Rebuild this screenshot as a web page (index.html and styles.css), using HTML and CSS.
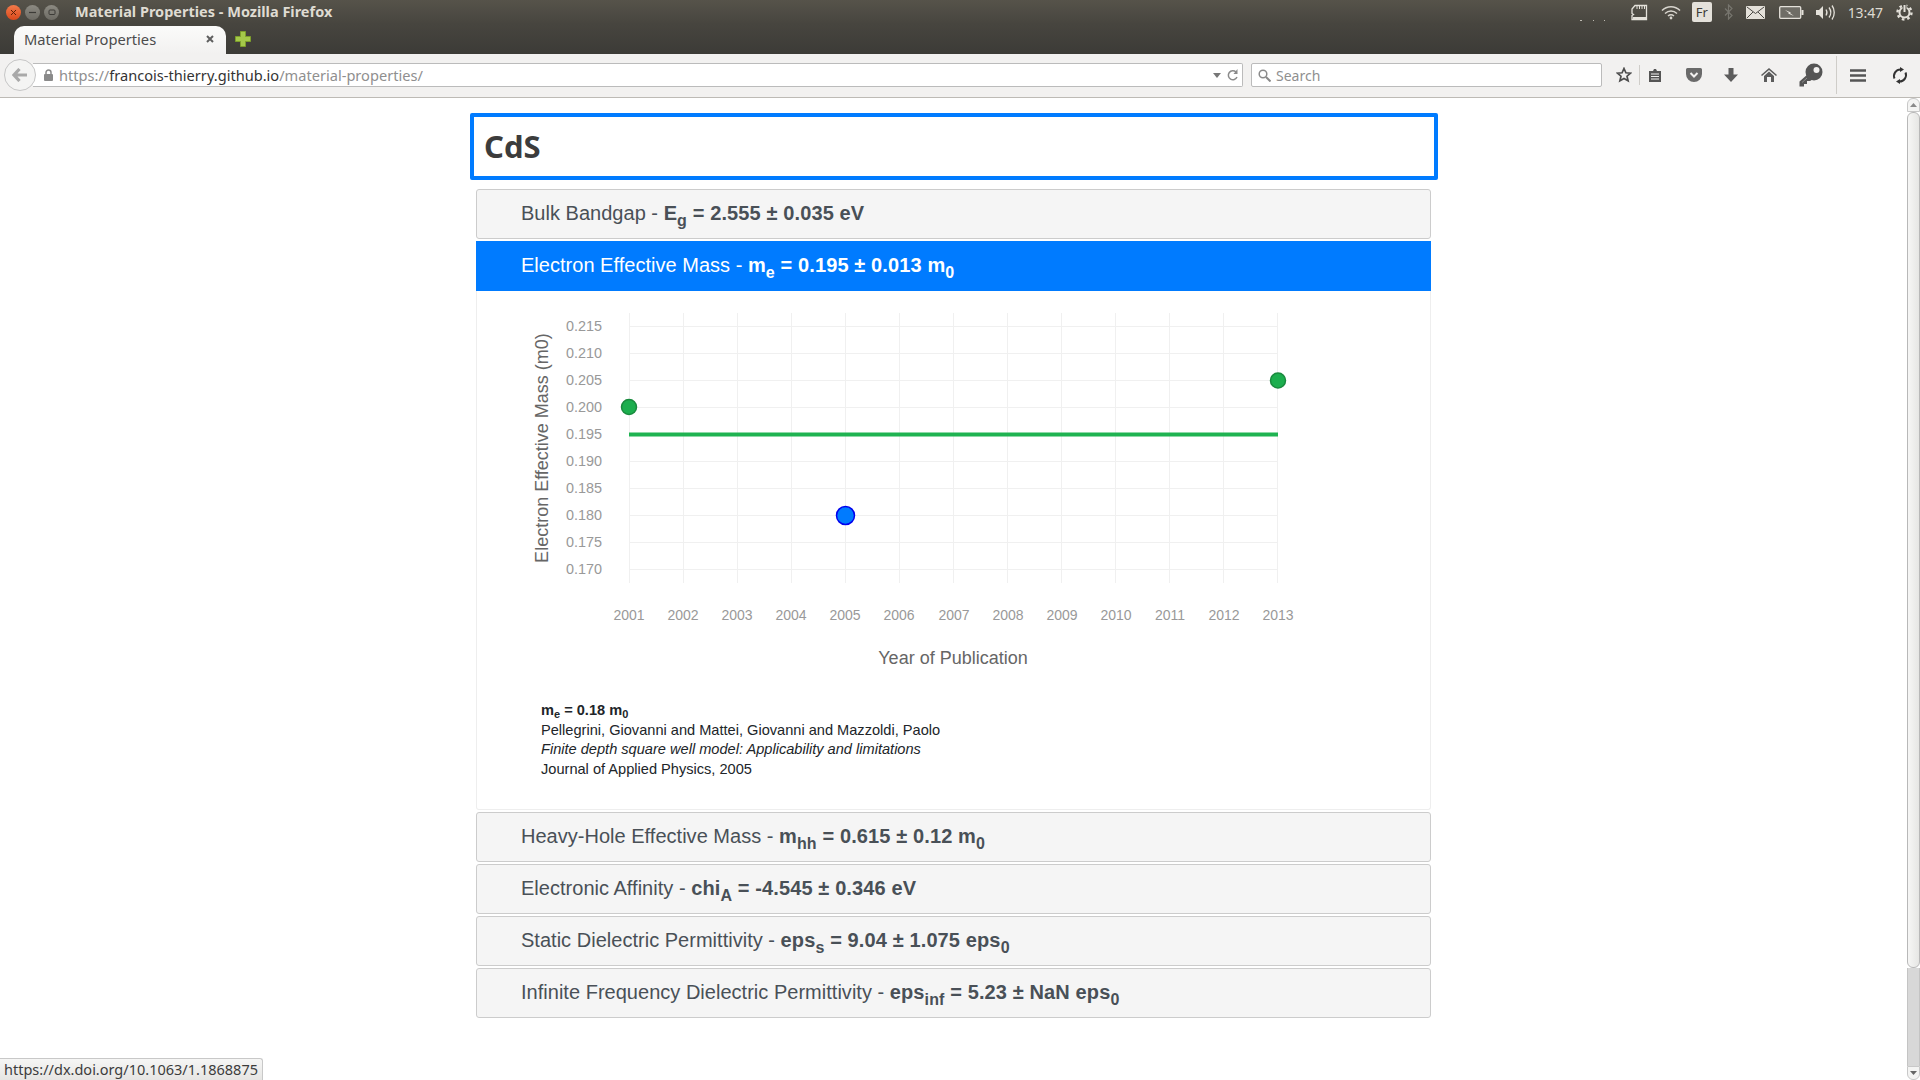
FILE: index.html
```html
<!DOCTYPE html>
<html lang="en">
<head>
    <meta charset="UTF-8">
    <title>Material Properties - Mozilla Firefox</title>
    <link rel="stylesheet" href="styles.css">
</head>
<body>
<div class="desktop">

    <div class="titlebar">
        <div class="window-buttons">
            <span class="win-btn win-close"><svg width="7" height="7" viewBox="0 0 7 7"><path d="M1 1l5 5M6 1l-5 5" stroke="#5c2008" stroke-width="1"/></svg></span>
            <span class="win-btn"><svg width="7" height="7" viewBox="0 0 7 7"><path d="M0 3.5h7" stroke="#3c3b37" stroke-width="1.2"/></svg></span>
            <span class="win-btn"><svg width="8" height="7" viewBox="0 0 8 7"><rect x="1" y="1" width="6" height="4.5" rx="1" fill="none" stroke="#3c3b37"/></svg></span>
        </div>
        <div class="window-title">Material Properties - Mozilla Firefox</div>
        <div class="indicators">
            <svg class="ind-dots" width="26" height="2" viewBox="0 0 26 2"><path d="M0 0h2v1H0zM13 0h1v1h-1zM24 0h1v1h-1z" fill="#bdbab2"/></svg>
            <svg class="ind-sd" width="18" height="17" viewBox="0 0 18 17"><path d="M5 1.5h11.5v14H2v-4l1.5-1-1.5-1V5z" fill="none" stroke="#e4e1da" stroke-width="1.3"/><path d="M3 13h13v2.5H3z" fill="#e4e1da"/><path d="M7 2v3M9.5 2v3M12 2v3M14.5 2v3" stroke="#e4e1da"/></svg>
            <svg class="ind-wifi" width="20" height="15" viewBox="0 0 20 15"><path d="M1 5.500c5-5 13-5 18 0M4 8.500c3.500-3.300 8.500-3.300 12 0M7 11c1.800-1.500 4.200-1.500 6 0" fill="none" stroke="#d8d5ce" stroke-width="1.5"/><circle cx="10" cy="13" r="1.4" fill="#d8d5ce"/></svg>
            <span class="ind-lang">Fr</span>
            <svg class="ind-bt" width="9" height="16" viewBox="0 0 9 16"><path d="M1 4.500l7 7-3.500 3.500V1L8 4.500l-7 7" fill="none" stroke="#77756e" stroke-width="1.2"/></svg>
            <svg class="ind-mail" width="19" height="13" viewBox="0 0 19 13"><rect width="19" height="13" rx="1" fill="#e4e1da"/><path d="M1 1l8.500 6.500L18 1M1 12l6-6M18 12l-6-6" fill="none" stroke="#4a4843" stroke-width="1"/></svg>
            <svg class="ind-batt" width="25" height="13" viewBox="0 0 25 13"><rect x=".7" y=".7" width="21" height="11.6" rx="1" fill="#6f6d66" stroke="#e4e1da" stroke-width="1.3"/><rect x="22.5" y="4" width="2" height="5" fill="#e4e1da"/><path d="M6 4l6 2.500-1 .5 4 3-6-2.500 1-.5z" fill="#e4e1da"/></svg>
            <svg class="ind-vol" width="21" height="17" viewBox="0 0 21 17"><path d="M1 6h3l4-4v13l-4-4H1z" fill="#e4e1da"/><path d="M11 5.500c1.300 2 1.300 4 0 6M14 3.500c2.200 3 2.200 7 0 10M17 1.500c3 4 3 10 0 14" fill="none" stroke="#e4e1da" stroke-width="1.3"/></svg>
            <span class="ind-time">13:47</span>
            <svg class="ind-gear" width="17" height="17" viewBox="0 0 17 17"><circle cx="8.5" cy="8.5" r="7" fill="none" stroke="#e4e1da" stroke-width="2.4" stroke-dasharray="2.6 2.9"/><circle cx="8.5" cy="8.5" r="5" fill="none" stroke="#e4e1da" stroke-width="2"/><path d="M8.5 0v8" stroke="#4e4c45" stroke-width="4"/><path d="M8.500 1v7" stroke="#e4e1da" stroke-width="2"/></svg>
        </div>
    </div>

    <div class="tabbar">
        <div class="tab">
            <span class="tab-label">Material Properties</span>
            <svg class="tab-close" width="8" height="8" viewBox="0 0 8 8"><path d="M1 1l6 6M7 1l-6 6" stroke="#5f5f5f" stroke-width="2"/></svg>
        </div>
        <svg class="new-tab" width="16" height="16" viewBox="0 0 16 16"><path d="M5.500 .5h5v5h5v5h-5v5h-5v-5h-5v-5h5z" fill="#a4c94a" stroke="#7d9e2b"/></svg>
    </div>

    <div class="navbar">
        <div class="back-btn"><svg width="16" height="14" viewBox="0 0 16 14"><path d="M7.500 1L2 7l5.500 6M2.500 7H15" fill="none" stroke="#a9a9a9" stroke-width="3.2"/></svg></div>
        <div class="urlbar">
            <svg class="lock" width="11" height="12" viewBox="0 0 11 12"><path d="M3 5V3.500a2.500 2.500 0 0 1 5 0V5" fill="none" stroke="#8a8a8a" stroke-width="1.5"/><rect x="1" y="5" width="9" height="7" rx="1" fill="#8a8a8a"/></svg>
            <span class="url-text">https://<b>francois-thierry.github.io</b>/material-properties/</span>
            <svg class="url-drop" width="8" height="5" viewBox="0 0 8 5"><path d="M0 0h8L4 5z" fill="#777"/></svg>
            <svg class="url-reload" width="12" height="13" viewBox="0 0 12 13"><path d="M10 8a4.500 4.500 0 1 1-1-5" fill="none" stroke="#8a8a8a" stroke-width="1.5"/><path d="M10.500 0v5h-4z" fill="#8a8a8a"/></svg>
        </div>
        <div class="searchbar">
            <svg width="13" height="13" viewBox="0 0 13 13"><circle cx="5" cy="5" r="3.8" fill="none" stroke="#8a8a8a" stroke-width="1.5"/><path d="M8 8l4.500 4.500" stroke="#8a8a8a" stroke-width="2"/></svg>
            <span>Search</span>
        </div>
        <div class="toolbar">
            <svg class="tool-star" width="16" height="16" viewBox="0 0 16 16"><path d="M8 1.500l1.900 4.300 4.600.4-3.500 3 1.100 4.600L8 11.400l-4.100 2.400L5 9.200l-3.500-3 4.600-.4z" fill="none" stroke="#4d4d4d" stroke-width="1.7"/></svg>
            <span class="tool-sep tool-sep-a"></span>
            <svg class="tool-list" width="14" height="15" viewBox="0 0 14 15"><path d="M1 3h4l1-2h2l1 2h4v11H1z" fill="#555"/><path d="M3 6h8M3 8.500h8M3 11h8" stroke="#f2f1f0" stroke-width="1"/></svg>
            <svg class="tool-pocket" width="16" height="14" viewBox="0 0 16 14"><path d="M0 1.500A1.500 1.500 0 0 1 1.500 0h13A1.500 1.500 0 0 1 16 1.500V6A8 8 0 0 1 0 6z" fill="#6a6a6a"/><path d="M4.500 5L8 8.500 11.500 5" fill="none" stroke="#f2f1f0" stroke-width="2"/></svg>
            <svg class="tool-down" width="14" height="14" viewBox="0 0 14 14"><path d="M4.500 0h5v6.500H14L7 14 0 6.500h4.500z" fill="#5c5c5c"/></svg>
            <svg class="tool-home" width="16" height="14" viewBox="0 0 16 14"><path d="M8 0l8 7-1 1-7-6-7 6-1-1z" fill="#5c5c5c"/><path d="M8 3.500l5 4.500v6H10V9H6v5H3V8z" fill="#5c5c5c"/></svg>
            <svg class="tool-key" width="24" height="24" viewBox="0 0 24 24"><circle cx="15" cy="9" r="8.500" fill="#555"/><path d="M9 11L.5 18.500v5H5V21h3v-3h3l5-3z" fill="#555"/><circle cx="17.500" cy="7" r="3" fill="#f2f1f0"/><path d="M8 15l-5 4.500" stroke="#8a8a8a" stroke-width="1"/></svg>
            <span class="tool-sep tool-sep-b"></span>
            <svg class="tool-menu" width="16" height="13" viewBox="0 0 16 13"><path d="M0 1.500h16M0 6.500h16M0 11.500h16" stroke="#555" stroke-width="2.6"/></svg>
            <svg class="tool-sync" width="16" height="17" viewBox="0 0 16 17"><path d="M2.500 11.500A6.500 6.500 0 0 1 8.500 2.500M13.500 5.500A6.500 6.500 0 0 1 7.500 14.500" fill="none" stroke="#333" stroke-width="2"/><path d="M8 0l4 2.500L8 5zM8 12l-4 2.500L8 17z" fill="#333"/></svg>
        </div>
    </div>

    <div class="viewport">
        <main class="page">
            <div class="material-box">CdS</div>

            <div class="prop-list">
                <div class="prop-item">Bulk Bandgap - <b>E<sub>g</sub> = 2.555 ± 0.035 eV</b></div>

                <div class="prop-item prop-active">Electron Effective Mass - <b>m<sub>e</sub> = 0.195 ± 0.013 m<sub>0</sub></b></div>

                <div class="prop-body">
                    <svg class="chart" width="954" height="390" viewBox="476 291 954 390">
                        <g class="grid">
                            <path d="M629.5 313v270M683.5 313v270M737.5 313v270M791.5 313v270M845.5 313v270M899.5 313v270M953.5 313v270M1007.5 313v270M1061.5 313v270M1115.5 313v270M1169.5 313v270M1223.5 313v270M1277.5 313v270"/>
                            <path d="M629 326.5h649M629 353.5h649M629 380.5h649M629 407.5h649M629 434.5h649M629 461.5h649M629 488.5h649M629 515.5h649M629 542.5h649M629 569.5h649"/>
                        </g>
                        <g class="tick tick-y">
                            <text x="602" y="331">0.215</text>
                            <text x="602" y="358">0.210</text>
                            <text x="602" y="385">0.205</text>
                            <text x="602" y="412">0.200</text>
                            <text x="602" y="439">0.195</text>
                            <text x="602" y="466">0.190</text>
                            <text x="602" y="493">0.185</text>
                            <text x="602" y="520">0.180</text>
                            <text x="602" y="547">0.175</text>
                            <text x="602" y="574">0.170</text>
                        </g>
                        <g class="tick tick-x">
                            <text x="629" y="620">2001</text>
                            <text x="683" y="620">2002</text>
                            <text x="737" y="620">2003</text>
                            <text x="791" y="620">2004</text>
                            <text x="845" y="620">2005</text>
                            <text x="899" y="620">2006</text>
                            <text x="954" y="620">2007</text>
                            <text x="1008" y="620">2008</text>
                            <text x="1062" y="620">2009</text>
                            <text x="1116" y="620">2010</text>
                            <text x="1170" y="620">2011</text>
                            <text x="1224" y="620">2012</text>
                            <text x="1278" y="620">2013</text>
                        </g>
                        <text class="axis-title" x="953" y="664">Year of Publication</text>
                        <text class="axis-title" transform="translate(548 448) rotate(-90)">Electron Effective Mass (m0)</text>
                        <path class="mean-line" d="M629 434.5h649"/>
                        <circle class="pt-green" cx="629" cy="407" r="7.5"/>
                        <circle class="pt-green" cx="1278" cy="380.5" r="7.5"/>
                        <circle class="pt-blue" cx="845.5" cy="515.5" r="9"/>
                    </svg>
                    <div class="citation">
                        <div><b>m<sub>e</sub> = 0.18 m<sub>0</sub></b></div>
                        <div>Pellegrini, Giovanni and Mattei, Giovanni and Mazzoldi, Paolo</div>
                        <div><i>Finite depth square well model: Applicability and limitations</i></div>
                        <div>Journal of Applied Physics, 2005</div>
                    </div>
                </div>

                <div class="prop-item">Heavy-Hole Effective Mass - <b>m<sub>hh</sub> = 0.615 ± 0.12 m<sub>0</sub></b></div>
                <div class="prop-item">Electronic Affinity - <b>chi<sub>A</sub> = -4.545 ± 0.346 eV</b></div>
                <div class="prop-item">Static Dielectric Permittivity - <b>eps<sub>s</sub> = 9.04 ± 1.075 eps<sub>0</sub></b></div>
                <div class="prop-item">Infinite Frequency Dielectric Permittivity - <b>eps<sub>inf</sub> = 5.23 ± NaN eps<sub>0</sub></b></div>
            </div>
        </main>

        <div class="scrollbar">
            <div class="sb-btn sb-up"><svg width="7" height="4" viewBox="0 0 7 4"><path d="M3.5 0L7 4H0z" fill="#8a8a8a"/></svg></div>
            <div class="sb-thumb"></div>
            <div class="sb-track"></div>
            <div class="sb-btn sb-down"><svg width="7" height="4" viewBox="0 0 7 4"><path d="M0 0h7L3.5 4z" fill="#666"/></svg></div>
        </div>

        <div class="status-link">https://dx.doi.org/10.1063/1.1868875</div>
    </div>
</div>
</body>
</html>
```

FILE: styles.css
```css
* {
    box-sizing: border-box;
}
html, body {
    margin: 0;
    padding: 0;
    height: 100%;
    overflow: hidden;
    background: #fff;
}
.desktop {
    display: flex;
    flex-direction: column;
    width: 1920px;
    height: 1080px;
}

/* window title + indicators */
.titlebar {
    display: flex;
    align-items: center;
    flex: 0 0 24px;
    padding-left: 6px;
    background: linear-gradient(#56534a, #47453f);
    font-family: "Noto Sans", sans-serif;
}
.window-buttons {
    display: flex;
    gap: 4px;
}
.win-btn {
    display: flex;
    align-items: center;
    justify-content: center;
    width: 15px;
    height: 15px;
    border-radius: 50%;
    background: linear-gradient(#8c8a82, #6d6b64);
}
.win-close {
    background: linear-gradient(#f37a4a, #d9491c);
}
.window-title {
    margin: -2px 0 0 16px;
    color: #dfdbd2;
    font-size: 14.5px;
    font-weight: 700;
}
.indicators {
    display: flex;
    align-items: center;
    margin-left: auto;
    height: 24px;
    color: #dfdbd2;
}
.ind-dots {
    align-self: flex-end;
    margin: 0 24px 2px 0;
}
.ind-sd { margin-right: 13px; }
.ind-wifi { margin-right: 11px; }
.ind-lang {
    display: flex;
    align-items: center;
    justify-content: center;
    width: 20px;
    height: 20px;
    margin-right: 12px;
    border-radius: 2px;
    background: #e4e1da;
    color: #3c3b37;
    font-size: 13px;
}
.ind-bt { margin-right: 13px; }
.ind-mail { margin-right: 14px; }
.ind-batt { margin-right: 11px; }
.ind-vol { margin-right: 12px; }
.ind-time {
    margin-right: 13px;
    font-size: 14px;
    letter-spacing: -.1px;
}
.ind-gear { margin-right: 7px; }

/* tabs */
.tabbar {
    display: flex;
    align-items: center;
    flex: 0 0 30px;
    padding-left: 14px;
    background: linear-gradient(#47453f, #3c3b37);
}
.tab {
    display: flex;
    align-items: center;
    align-self: flex-end;
    justify-content: space-between;
    width: 212px;
    height: 28px;
    padding: 0 12px 2px 10px;
    border-radius: 10px 10px 0 0;
    background: linear-gradient(#fbfbfa, #f2f1f0);
    font-family: "Noto Sans", sans-serif;
    font-size: 14.7px;
    color: #4c4c4c;
}
.new-tab {
    margin-left: 9px;
}

/* navigation toolbar */
.navbar {
    display: flex;
    align-items: center;
    flex: 0 0 43px;
    padding-bottom: 1px;
    background: #f2f1f0;
    border-bottom: 1px solid #bdbab5;
    font-family: "Noto Sans", sans-serif;
    font-size: 14px;
}
.back-btn {
    position: relative;
    z-index: 1;
    display: flex;
    align-items: center;
    justify-content: center;
    width: 32px;
    height: 32px;
    margin-left: 4px;
    border: 1px solid #c6c6c6;
    border-radius: 50%;
    background: #f4f4f3;
}
.urlbar {
    display: flex;
    align-items: center;
    width: 1210px;
    height: 24px;
    margin-left: -3px;
    padding: 0 3px 0 10px;
    border: 1px solid #bbb;
    border-left: 0;
    border-radius: 0 2px 2px 0;
    background: #fff;
    color: #8f8f8f;
}
.url-text {
    margin-left: 5px;
    font-size: 14.6px;
}
.url-text b {
    font-weight: 400;
    color: #333;
}
.url-drop {
    margin-left: auto;
}
.url-reload {
    margin-left: 6px;
}
.searchbar {
    display: flex;
    align-items: center;
    gap: 5px;
    width: 351px;
    height: 24px;
    margin-left: 8px;
    padding-left: 6px;
    border: 1px solid #bbb;
    border-radius: 2px;
    background: #fff;
    color: #8f8f8f;
}
.toolbar {
    display: flex;
    align-items: center;
    flex: 1;
    height: 42px;
    padding-left: 14px;
}
.tool-sep {
    width: 1px;
    background: #cfcdc9;
}
.tool-sep-a {
    height: 20px;
    margin: 0 8px 0 7px;
}
.tool-sep-b {
    height: 38px;
    margin: 0 13px 0 13px;
}
.tool-pocket { margin-left: 24px; }
.tool-down { margin-left: 22px; }
.tool-home { margin-left: 23px; }
.tool-key { margin-left: 22px; }
.tool-sync { margin-left: 26px; }

/* page content */
.viewport {
    position: relative;
    display: flex;
    flex: 1;
    min-height: 0;
}
.page {
    flex: 1;
    padding: 15px 0 0 470px;
    font-family: "Liberation Sans", Arial, sans-serif;
    color: #495057;
}
.material-box {
    width: 968px;
    height: 67px;
    padding-left: 10px;
    border: 4px solid #007bff;
    border-radius: 2px;
    font-family: "Noto Sans", sans-serif;
    font-size: 31px;
    font-weight: 700;
    line-height: 59px;
    color: #3c3c3c;
}
.prop-list {
    display: flex;
    flex-direction: column;
    gap: 2px;
    width: 955px;
    margin: 9px 0 0 6px;
}
.prop-item {
    height: 50px;
    padding-left: 44px;
    border: 1px solid #ccc;
    border-radius: 3px;
    background: #f5f5f5;
    font-size: 20px;
    letter-spacing: .02px;
    line-height: 46px;
}
.prop-item b {
    letter-spacing: .12px;
}
.prop-item sub {
    font-size: 16px;
    line-height: 0;
    vertical-align: -6px;
}
.prop-active {
    border-color: #007bff;
    border-radius: 0;
    background: #007bff;
    color: #fff;
}
.prop-body {
    height: 519px;
    margin-top: -2px;
    border: 1px solid #eee;
    border-top: 0;
    border-radius: 0 0 3px 3px;
    background: #fff;
}
.chart {
    display: block;
    margin-left: -1px;
}
.grid path {
    fill: none;
    stroke: #f0f0f0;
    stroke-width: 1;
}
.tick text {
    fill: #999;
    font-size: 14px;
}
.tick-y text {
    font-size: 14.4px;
    text-anchor: end;
}
.tick-x text {
    text-anchor: middle;
}
.axis-title {
    fill: #666;
    font-size: 18px;
    text-anchor: middle;
}
.mean-line {
    fill: none;
    stroke: #1fb351;
    stroke-width: 4;
}
.pt-green {
    fill: #1cae4e;
    stroke: #198a3e;
    stroke-width: 1.5;
}
.pt-blue {
    fill: #007bff;
    stroke: #0000ee;
    stroke-width: 1.5;
}
.citation {
    margin: 20px 0 0 64px;
    font-size: 14.6px;
    line-height: 19.6px;
    color: #212529;
}
.citation sub {
    font-size: 11px;
    line-height: 0;
    vertical-align: -3px;
}

/* scrollbar + link overlay */
.scrollbar {
    display: flex;
    flex-direction: column;
    flex: 0 0 13px;
    margin-right: 0;
}
.sb-btn {
    display: flex;
    align-items: center;
    justify-content: center;
    flex: 0 0 14px;
    border: 1px solid #c8c8c8;
    background: #f4f4f3;
}
.sb-up {
    border-radius: 6px 6px 0 0;
}
.sb-down {
    border-radius: 0 0 6px 6px;
}
.sb-thumb {
    flex: 0 0 856px;
    border: 1px solid #b8b8b8;
    border-radius: 6px;
    background: linear-gradient(90deg, #f6f6f5, #e6e6e4);
}
.sb-track {
    flex: 1;
    border: 1px solid #c4c4c4;
    border-width: 0 1px;
    background: #d8d8d8;
}
.status-link {
    position: absolute;
    left: 0;
    bottom: 0;
    width: 263px;
    height: 22px;
    padding-left: 4px;
    border: 1px solid #c8c8c8;
    border-width: 1px 1px 0 0;
    border-radius: 0 3px 0 0;
    background: linear-gradient(#f6f6f5, #e6e5e3);
    font-family: "Noto Sans", sans-serif;
    font-size: 14.5px;
    line-height: 21px;
    color: #3c3c3c;
    white-space: nowrap;
}
```
